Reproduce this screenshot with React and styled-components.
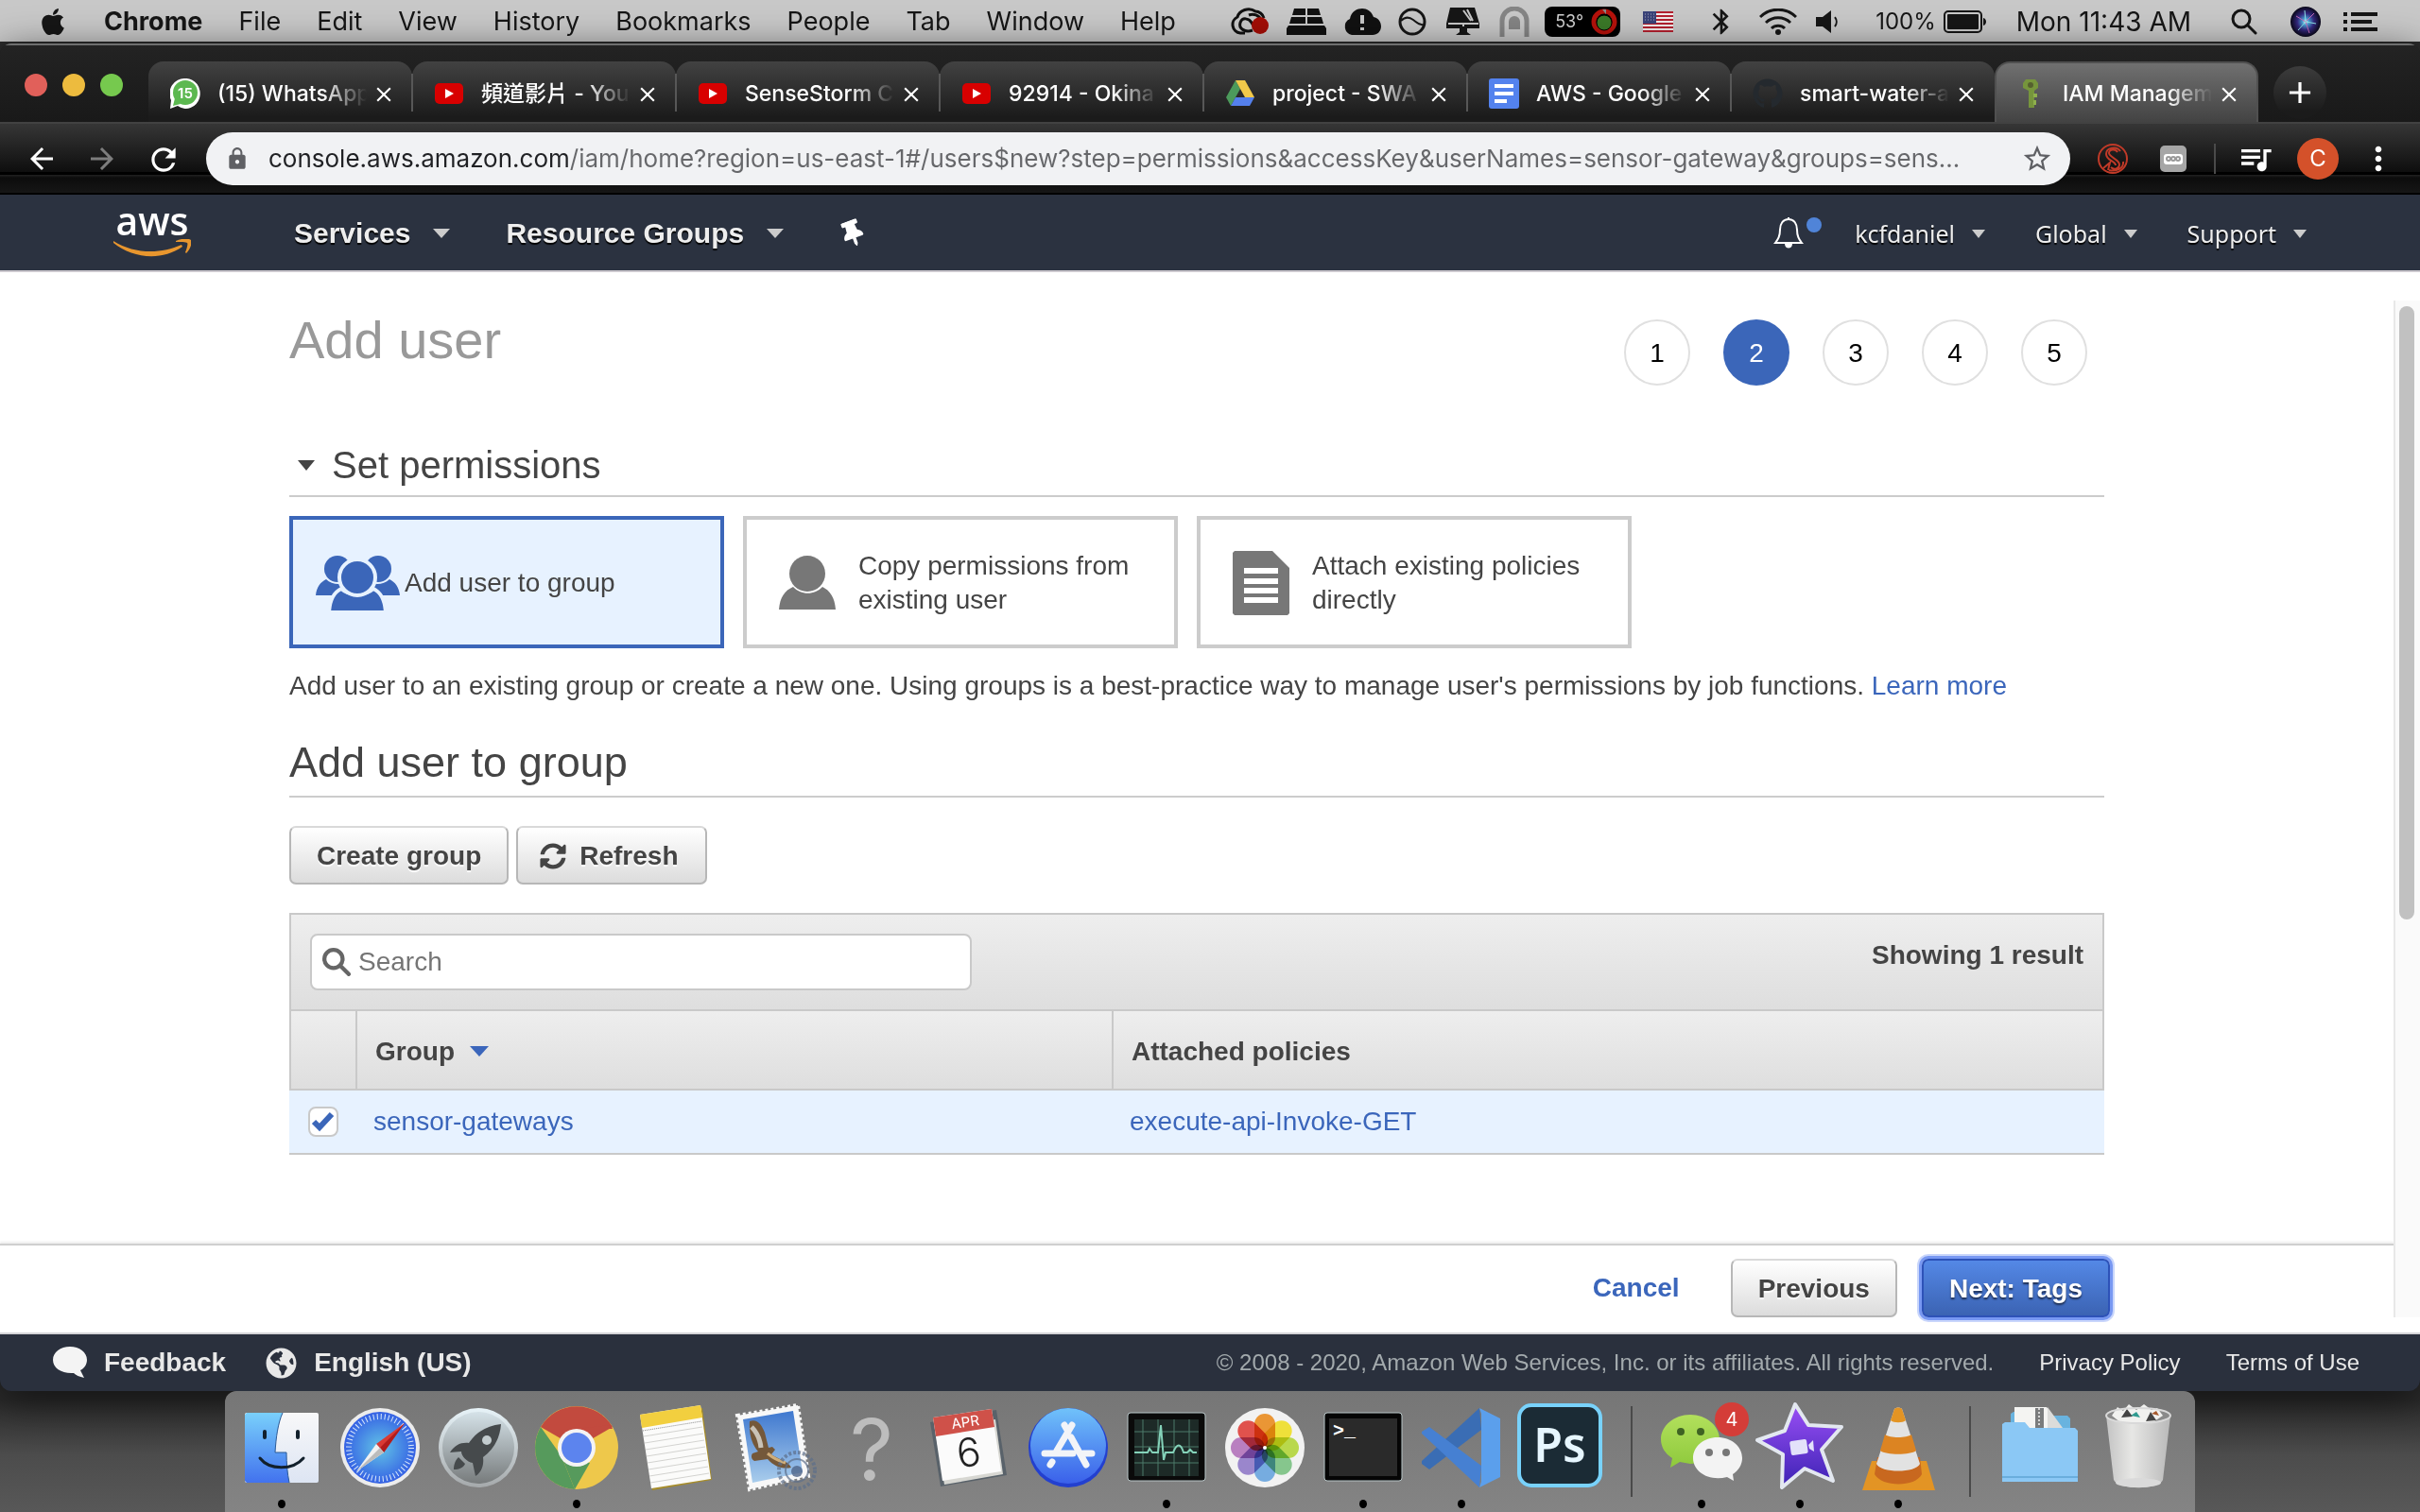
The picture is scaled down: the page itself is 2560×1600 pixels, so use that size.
import React, { useState } from "react";
import styled, { createGlobalStyle, css } from "styled-components";
import {
  MdArrowBack,
  MdArrowForward,
  MdRefresh,
  MdLock,
  MdStarBorder,
  MdQueueMusic,
  MdMoreVert,
  MdBluetooth,
  MdClose,
  MdAdd,
} from "react-icons/md";
import { FaApple, FaGithub, FaSyncAlt, FaThumbtack, FaGlobeAmericas } from "react-icons/fa";

const systemFont = `Inter, "Noto Sans CJK TC", sans-serif`;
const pageFont = `"Liberation Sans", Arial, sans-serif`;
const navFont = `"Noto Sans", "Open Sans", sans-serif`;

const GlobalStyle = createGlobalStyle`
  * { box-sizing: border-box; }
  body { margin: 0; background: #555; }
  button, input { font: inherit; color: inherit; }
  button { border: 0; padding: 0; background: none; cursor: pointer; }
  a { text-decoration: none; }
  svg { display: block; flex: none; }
`;

/* ---------- shell ---------- */

const Desktop = styled.div`
  min-height: 100vh;
  display: flex;
  flex-direction: column;
  background: linear-gradient(#2b2b2b 0, #2b2b2b calc(100% - 128px), #2b2b2b calc(100% - 118px), #4c4c4c calc(100% - 60px), #585858 100%);
  font-family: ${systemFont};
`;

const MenuBar = styled.header`
  height: 44px;
  flex: none;
  display: flex;
  align-items: center;
  justify-content: space-between;
  padding: 1px 45px 0 40px;
  background: #c8c8c8;
  color: #161616;
  font-size: 27px;
  line-height: 32px;
`;

const MenuList = styled.nav`
  display: flex;
  align-items: center;
  gap: 38px;
`;

const MenuItem = styled.button`
  font-weight: ${(p) => (p.$strong ? 700 : 400)};
  white-space: nowrap;
`;

const StatusList = styled.div`
  display: flex;
  align-items: center;
  white-space: nowrap;
`;

const StatusItem = styled.span`
  display: flex;
  align-items: center;
  gap: 8px;
  margin-left: ${(p) => p.$gap}px;
  font-size: ${(p) => (p.$small ? 24 : 28)}px;
`;

const TempBadge = styled.span`
  display: flex;
  align-items: center;
  gap: 8px;
  height: 32px;
  padding: 0 3px 0 11px;
  margin-left: 16px;
  border-radius: 8px;
  background: #000;
  color: #d0d0d0;
  font-size: 18px;
  line-height: 24px;
`;

/* ---------- browser window ---------- */

const BrowserWindow = styled.section`
  flex: 1;
  display: flex;
  flex-direction: column;
  margin-top: 2px;
  border-radius: 12px;
  overflow: hidden;
  background: #1d1d1d;
  box-shadow: 0 8px 40px rgba(0, 0, 0, 0.6);
`;

const TabStrip = styled.div`
  height: 85px;
  flex: none;
  display: flex;
  align-items: flex-end;
  padding-left: 26px;
  border-top: 2px solid #6e6f6f;
  border-bottom: 2px solid #424242;
  background: linear-gradient(#232323, #191919);
`;

const WindowControls = styled.div`
  display: flex;
  gap: 16px;
  align-self: center;
  margin-right: 27px;
  padding-top: 3px;
`;

const ControlDot = styled.button`
  width: 24px;
  height: 24px;
  border-radius: 50%;
  background: ${(p) => p.$color};
`;

const TabList = styled.div`
  display: flex;
  align-items: flex-end;
  height: 64px;
  flex: 0 1 2232px;
  min-width: 0;
`;

const Tab = styled.div`
  flex: 1 1 0;
  min-width: 0;
  height: 64px;
  display: flex;
  align-items: center;
  padding: 3px 19px 0 23px;
  border-radius: 16px 16px 0 0;
  color: #fff;
  background: linear-gradient(#424242, #1b1b1b 92%);
  ${(p) =>
    p.$active &&
    css`
      background: linear-gradient(#707070, #434343);
      border: 2px solid #505050;
      border-bottom: 0;
      padding: 1px 18px 0 20px;
    `}
`;

const TabDivider = styled.span`
  width: 2px;
  height: 40px;
  margin: 0 -1px 11px;
  background: ${(p) => (p.$hidden ? "transparent" : "#575757")};
  z-index: 1;
`;

const TabIcon = styled.span`
  width: 32px;
  height: 32px;
  display: grid;
  place-items: center;
  margin-right: 18px;
  flex: none;
`;

const TabTitle = styled.span`
  flex: 1;
  min-width: 0;
  overflow: hidden;
  white-space: nowrap;
  font-size: 23px;
  font-weight: 500;
  line-height: 32px;
  mask-image: linear-gradient(90deg, #000 68%, transparent 97%);
`;

const TabClose = styled.button`
  width: 24px;
  height: 24px;
  display: grid;
  place-items: center;
`;

const NewTab = styled.button`
  width: 56px;
  height: 56px;
  display: grid;
  place-items: center;
  margin: 0 0 3px 16px;
  border-radius: 50%;
  color: #fff;
  background: linear-gradient(#3c3c3c, #1b1b1b 85%);
`;

const Toolbar = styled.div`
  height: 75px;
  flex: none;
  display: flex;
  align-items: center;
  padding: 0 24px 0 26px;
  border-bottom: 2px solid #000;
  background: linear-gradient(#363636 0, #0e0e0e 51px, #000 51px, #000 54px, #222 54px, #0c0c0c 57px, #161616 100%);
  color: #fff;
`;

const NavButton = styled.button`
  display: grid;
  place-items: center;
  width: 36px;
  height: 36px;
  margin-right: 28px;
  color: ${(p) => (p.$dim ? "#7d7d7d" : "#fff")};
`;

const Omnibox = styled.label`
  flex: 1;
  height: 56px;
  display: flex;
  align-items: center;
  margin-right: 29px;
  padding: 0 18px 0 20px;
  border-radius: 28px;
  background: #f1f2f4;
  color: #5f6064;
`;

const UrlInput = styled.input`
  flex: 1;
  min-width: 0;
  margin: 0 14px 0 20px;
  padding: 0;
  border: 0;
  outline: 0;
  font-size: 26px;
  line-height: 36px;
  background: linear-gradient(90deg, #202124 317px, #66676a 317px);
  background-clip: text;
  -webkit-text-fill-color: transparent;
`;

const ToolDivider = styled.span`
  width: 2px;
  height: 32px;
  margin: 0 22px 0 29px;
  background: #4a4a4a;
`;

const Avatar = styled.button`
  width: 44px;
  height: 44px;
  margin: 0 22px 0 24px;
  border-radius: 50%;
  background: #d4512a;
  color: #fff;
  font-size: 24px;
  line-height: 44px;
`;

const IconButton = styled.button`
  display: grid;
  place-items: center;
  margin-left: ${(p) => p.$gap || 0}px;
`;

/* ---------- console navigation ---------- */

const ConsoleNav = styled.nav`
  height: 82px;
  flex: none;
  display: flex;
  align-items: center;
  padding: 2px 120px 0 119px;
  border-bottom: 2px solid #cdc9cf;
  background: #2b3240;
  color: #eee;
  text-shadow: 0 2px 1px #000;
`;

const AwsLogo = styled.a`
  width: 84px;
  margin-right: 108px;
  display: flex;
  flex-direction: column;
  align-items: center;
  gap: 8px;
  color: #fff;
  font-family: "Open Sans", sans-serif;
  font-weight: 600;
  font-size: 41px;
  line-height: 24px;
  text-shadow: none;
`;

const NavMain = styled.button`
  display: flex;
  align-items: center;
  gap: 24px;
  margin-right: 59px;
  font-family: ${pageFont};
  font-weight: 700;
  font-size: 30px;
  line-height: 36px;
  text-shadow: inherit;
  white-space: nowrap;
`;

const NavSide = styled.button`
  display: flex;
  align-items: center;
  gap: 18px;
  margin-left: ${(p) => (p.$first ? 30 : 53)}px;
  font-family: ${navFont};
  font-size: 25px;
  line-height: 36px;
  text-shadow: inherit;
`;

const Spacer = styled.span`
  flex: 1;
`;

const Caret = styled.span`
  border: ${(p) => p.$size || 9}px solid transparent;
  border-top-color: ${(p) => p.$color || "#ccc"};
  border-top-width: ${(p) => p.$tall || 10}px;
  border-bottom: 0;
`;

/* ---------- page ---------- */

const Viewport = styled.div`
  flex: 1;
  display: flex;
  background: #fff;
  padding-bottom: 16px;
  font-family: ${pageFont};
  font-size: 28px;
  line-height: 36px;
  color: #444;
`;

const PageColumn = styled.div`
  flex: 1;
  min-width: 0;
  display: flex;
  flex-direction: column;
`;

const ScrollTrack = styled.div`
  width: 28px;
  margin-top: 30px;
  padding: 6px 4px;
  border-left: 2px solid #e8e8e8;
  background: #fafafa;
`;

const ScrollThumb = styled.div`
  height: 61%;
  width: 16px;
  border-radius: 8px;
  background: #c1c1c1;
`;

const Main = styled.main`
  flex: 1;
  width: 100%;
  max-width: 1920px;
  margin: 0 auto;
  padding-top: 40px;
`;

const TitleRow = styled.div`
  display: flex;
  justify-content: space-between;
  align-items: flex-start;
`;

const PageTitle = styled.h1`
  margin: 0;
  font-weight: 400;
  font-size: 56px;
  line-height: 64px;
  color: #999;
`;

const Steps = styled.ol`
  display: flex;
  gap: 35px;
  margin: 10px 18px 0 0;
  padding: 0;
  list-style: none;
`;

const Step = styled.li`
  width: 70px;
  height: 70px;
  display: grid;
  place-items: center;
  padding-top: 2px;
  border-radius: 50%;
  border: 2px solid ${(p) => (p.$current ? "#3b66b9" : "#e0e0e0")};
  background: ${(p) => (p.$current ? "#3b66b9" : "#fff")};
  color: ${(p) => (p.$current ? "#fff" : "#000")};
`;

const SectionTitle = styled.h2`
  display: flex;
  align-items: center;
  gap: 18px;
  margin: 60px 0 20px;
  padding: 0 0 8px 9px;
  border-bottom: 2px solid #ccc;
  font-weight: 400;
  font-size: 40px;
  line-height: 48px;
`;

const GroupTitle = styled.h2`
  margin: 37px 0 30px;
  padding-bottom: 9px;
  border-bottom: 2px solid #ccc;
  font-weight: 400;
  font-size: 45px;
  line-height: 52px;
`;

const CardRow = styled.div`
  display: flex;
  gap: 20px;
`;

const Card = styled.button`
  width: 460px;
  height: 140px;
  display: flex;
  align-items: center;
  gap: 4px;
  padding: 1px 30px 0 24px;
  border: 4px solid ${(p) => (p.$selected ? "#3b66b9" : "#ccc")};
  background: ${(p) => (p.$selected ? "#e7f2ff" : "#fff")};
  text-align: left;
`;

const Intro = styled.p`
  margin: 22px 0 0;
`;

const TextLink = styled.a`
  color: #3b66bb;
  font-weight: ${(p) => (p.$strong ? 700 : 400)};
`;

const ButtonRow = styled.div`
  display: flex;
  gap: 8px;
  margin-bottom: 30px;
`;

const Button = styled.button`
  height: 62px;
  display: flex;
  align-items: center;
  gap: 14px;
  padding: 2px 27px 0;
  border: 2px solid #b7b7b7;
  border-top-color: #d9d9d9;
  border-radius: 7px;
  background: linear-gradient(#fff, #dcdcdc);
  font-weight: 700;
  text-shadow: 0 2px 1px #fff;
  ${(p) => p.$iconic && css`padding: 2px 28px 0 23px;`}
  ${(p) =>
    p.$primary &&
    css`
      border-color: #2d52b8;
      background: linear-gradient(#5488e6, #3b63b3);
      color: #fff;
      text-shadow: 0 2px 2px #1d2c4d;
      box-shadow: 0 0 0 3px #7898f2, 0 0 0 5px #c9d6fb;
    `}
`;

const SearchBar = styled.div`
  display: flex;
  justify-content: space-between;
  align-items: flex-start;
  padding: 20px;
  border: 2px solid #c9c9c9;
  background: linear-gradient(#eee, #dedede);
`;

const SearchBox = styled.label`
  width: 700px;
  height: 60px;
  display: flex;
  align-items: center;
  gap: 8px;
  padding: 0 11px;
  border: 2px solid #c9c9c9;
  border-radius: 8px;
  background: #fff;
`;

const SearchInput = styled.input`
  flex: 1;
  min-width: 0;
  padding: 0;
  border: 0;
  outline: 0;
  background: none;
  &::placeholder {
    color: #757575;
  }
`;

const ResultCount = styled.strong`
  margin-top: 5px;
`;

const GroupTable = styled.table`
  width: 100%;
  table-layout: fixed;
  border-collapse: separate;
  border-spacing: 0;
`;

const HeadCell = styled.th`
  width: ${(p) => p.$width || "auto"};
  height: 84px;
  padding: 3px 0 0 19px;
  border-right: 2px solid #c9c9c9;
  border-bottom: 2px solid #c9c9c9;
  background: linear-gradient(#eee, #dedede);
  text-align: left;
  &:first-child {
    border-left: 2px solid #c9c9c9;
  }
`;

const SortButton = styled.button`
  display: flex;
  align-items: center;
  gap: 16px;
  font-weight: 700;
`;

const Cell = styled.td`
  height: 68px;
  padding: ${(p) => (p.$check ? "0 0 0 20px" : "0 0 0 17px")};
  border-bottom: 2px solid #c9c9c9;
  background: #e7f2ff;
`;

const CheckLabel = styled.label`
  display: grid;
  width: 32px;
  height: 32px;
  > * {
    grid-area: 1 / 1;
  }
  > svg {
    pointer-events: none;
    display: none;
  }
  > input:checked + svg {
    display: block;
  }
`;

const CheckInput = styled.input`
  appearance: none;
  width: 32px;
  height: 32px;
  margin: 0;
  border: 2px solid #c9c9c9;
  border-radius: 8px;
  background: #fff;
`;

const ActionBar = styled.div`
  flex: none;
  border-top: 2px solid #cfcfcf;
  box-shadow: 0 -2px 2px #ededed;
`;

const ActionInner = styled.div`
  display: flex;
  align-items: center;
  justify-content: flex-end;
  gap: 26px;
  width: 100%;
  max-width: 1932px;
  margin: 0 auto;
  padding-top: 14px;
  > a {
    margin-right: 28px;
  }
`;

const Footer = styled.footer`
  height: 62px;
  flex: none;
  display: flex;
  align-items: center;
  padding: 0 64px 0 56px;
  border-top: 2px solid #d5d5d8;
  background: #2a303d;
  color: #e8e8e8;
  font-family: ${pageFont};
  font-size: 24px;
  line-height: 32px;
`;

const FooterButton = styled.button`
  display: flex;
  align-items: center;
  gap: 18px;
  margin-right: 42px;
  font-weight: 700;
  font-size: 28px;
`;

const Copyright = styled.span`
  color: #a3aaad;
`;

const FooterLink = styled.a`
  margin-left: 48px;
  color: #e8e8e8;
`;

/* ---------- dock ---------- */

const Dock = styled.nav`
  height: 128px;
  flex: none;
  align-self: center;
  display: flex;
  padding: 0 8px;
  border-radius: 12px 12px 0 0;
  background: linear-gradient(#767676, #848484);
`;

const DockSlot = styled.button`
  width: 104px;
  display: flex;
  flex-direction: column;
  align-items: center;
  gap: 3px;
`;

const RunningDot = styled.span`
  width: 8px;
  height: 9px;
  border-radius: 50%;
  background: #000;
`;

const DockDivider = styled.span`
  width: 2px;
  height: 96px;
  margin: 16px 21px 0 23px;
  background: #4a4a4a;
`;

/* ---------- small drawings ---------- */

const CloudApp = () => (
  <svg width="42" height="30" viewBox="0 0 42 30">
    <g fill="none" stroke="#111" strokeWidth="3">
      <path d="M16 27H11A9 9 0 0 1 8 10C10 3 20-1 27 4c4 0 8 3 9 7" />
      <path d="M24 24c-8 3-15-2-13-8s9-5 12 0 4 7 7 7M20 8c5-2 11 0 13 5" />
    </g>
    <circle cx="32" cy="19" r="9" fill="#a30e06" />
  </svg>
);

const BoxStack = () => (
  <svg width="42" height="28" viewBox="0 0 42 28" fill="#111">
    <path d="M8 0h12v7H6zM22 0h12l2 7H22zM5 9h15v7H3zM22 9h15l2 7H22zM2 18h38l2 3v7H0v-7z" />
  </svg>
);

const CloudAlert = () => (
  <svg width="40" height="28" viewBox="0 0 40 28">
    <path d="M9 28A9 9 0 0 1 7 11C8 3 15 0 20 0s10 3 12 9c5 1 8 5 8 10s-4 9-9 9z" fill="#111" />
    <path d="M20 7v9M20 20v3" stroke="#c8c8c8" strokeWidth="4" />
  </svg>
);

const CircleWave = () => (
  <svg width="30" height="30" viewBox="0 0 30 30" fill="none" stroke="#161616" strokeWidth="3">
    <circle cx="15" cy="15" r="13" />
    <path d="M3 14c5-5 9-4 13-1s6 6 11 5" strokeWidth="2" />
  </svg>
);

const DesktopMac = () => (
  <svg width="36" height="30" viewBox="0 0 36 30">
    <path d="M4 0h26l5 17v5H22v4l4 3H10l4-3v-4H0v-5z" fill="#161616" />
    <path d="M2 17h32M18 18v2M18 3l8 11M22 2l6 12" stroke="#c8c8c8" strokeWidth="2" fill="none" />
  </svg>
);

const Arch = () => (
  <svg width="32" height="32" viewBox="0 0 32 32" fill="none" stroke="#858585" strokeWidth="5">
    <path d="M3 32V15a13 13 0 0 1 26 0v17" />
    <path d="M10 24v-8a6 6 0 0 1 12 0v8z" fill="#858585" stroke="none" />
  </svg>
);

const Gauge = () => (
  <svg width="28" height="28" viewBox="0 0 28 28">
    <circle cx="14" cy="14" r="11" fill="none" stroke="#b5120b" strokeWidth="5" />
    <circle cx="14" cy="15" r="8" fill="#3b7a28" stroke="#000" />
    <path d="M12 1h4v5z" fill="#888" />
  </svg>
);

const Flag = () => (
  <svg width="32" height="22" viewBox="0 0 32 22">
    <rect width="32" height="22" fill="#f3ecec" />
    {[0, 1, 2, 3, 4, 5].map((i) => (
      <rect key={i} y={i * 4} width="32" height="2" fill="#b3202f" />
    ))}
    <rect width="14" height="13" fill="#3a4379" />
    <path d="M2 3h11M2 6h11M2 9h11" stroke="#aab" strokeDasharray="1 2" />
  </svg>
);

const Wifi = () => (
  <svg width="40" height="28" viewBox="0 0 40 28" fill="none" stroke="#161616" strokeWidth="3">
    <path d="M1 9a27 27 0 0 1 38 0M7 15a19 19 0 0 1 26 0M13 21a10 10 0 0 1 14 0" />
    <circle cx="20" cy="25" r="3" fill="#161616" stroke="none" />
  </svg>
);

const Volume = () => (
  <svg width="26" height="24" viewBox="0 0 26 24">
    <path d="M0 7h7l9-7v24l-9-7H0z" fill="#161616" />
    <path d="M20 7a8 8 0 0 1 0 10" fill="none" stroke="#161616" strokeWidth="2" />
  </svg>
);

const Battery = () => (
  <svg width="46" height="24" viewBox="0 0 46 24">
    <rect x="1" y="1" width="39" height="22" rx="4" fill="none" stroke="#161616" strokeWidth="2" />
    <rect x="4" y="4" width="33" height="16" rx="1" fill="#161616" />
    <path d="M42 8c4 1 4 7 0 8z" fill="#161616" />
  </svg>
);

const Magnifier = ({ size = 28, width = 3, color = "#161616" }) => (
  <svg width={size} height={size} viewBox="0 0 28 28" fill="none" stroke={color} strokeWidth={width} aria-hidden="true">
    <circle cx="11" cy="11" r="9" />
    <path d="M18 18l8 8" strokeLinecap="round" />
  </svg>
);

const Siri = () => (
  <svg width="32" height="32" viewBox="0 0 32 32">
    <defs>
      <radialGradient id="siri">
        <stop offset="0" stopColor="#fff" />
        <stop offset=".2" stopColor="#4aa5d8" />
        <stop offset=".55" stopColor="#33287f" />
        <stop offset="1" stopColor="#0a0818" />
      </radialGradient>
    </defs>
    <circle cx="16" cy="16" r="16" fill="url(#siri)" />
    <path d="M16 16L6 10M16 16l9-9M16 16l4 12" stroke="#c86ab8" strokeWidth="1" />
    <path d="M16 16L15 4M16 16l-8 9M16 16l11 2" stroke="#8ee6e8" strokeWidth="1" />
  </svg>
);

const ListIcon = () => (
  <svg width="36" height="20" viewBox="0 0 36 20" stroke="#161616" strokeWidth="4">
    <path d="M0 2h4M8 2h28M0 10h4M8 10h22M0 18h4M8 18h28" />
  </svg>
);

const WhatsAppIcon = () => (
  <svg width="32" height="32" viewBox="0 0 32 32">
    <path d="M16 0a15 16 0 1 1-8 29l-8 3 1-9A16 16 0 0 1 16 0z" fill="#fff" />
    <circle cx="16" cy="15" r="13" fill="#5cb850" />
    <path d="M3 29l2-8 6 6z" fill="#5cb850" />
    <text x="16" y="21" textAnchor="middle" fontSize="15" fontWeight="600" fill="#fff" fontFamily="Inter, sans-serif">15</text>
  </svg>
);

const YoutubeIcon = () => (
  <svg width="30" height="22" viewBox="0 0 30 22">
    <rect width="30" height="22" rx="5" fill="#d80000" />
    <path d="M11 6l9 5-9 5z" fill="#fff" />
  </svg>
);

const DriveIcon = () => (
  <svg width="30" height="27" viewBox="0 0 30 27">
    <path d="M10 0L0 18l5 9 10-18z" fill="#4c9a5b" />
    <path d="M10 0h10l10 18H20z" fill="#f2c94a" />
    <path d="M10 18h20l-5 9H5z" fill="#5480ec" />
  </svg>
);

const DocsIcon = () => (
  <svg width="32" height="32" viewBox="0 0 32 32">
    <rect width="32" height="32" rx="3" fill="#5382ee" />
    <path d="M6 8h20M6 16h20M6 24h13" stroke="#fff" strokeWidth="4" />
  </svg>
);

const KeyIcon = () => (
  <svg width="20" height="30" viewBox="0 0 20 30">
    <path d="M5 0h10l3 4v5l-4 3v18H8V12L2 9V4z" fill="#76953c" />
    <path d="M13 15h4v4h-4zM13 22h3v5h-3z" fill="#8fb04c" />
    <circle cx="10" cy="6" r="3" fill="#55602f" />
  </svg>
);

const SerpentIcon = () => (
  <svg width="32" height="32" viewBox="0 0 32 32" fill="none" stroke="#c03a28" strokeWidth="2">
    <circle cx="16" cy="16" r="15" />
    <path d="M21 9c-2-4-9-3-9 1s11 7 11 12-6 6-9 3M24 8c-4-6-15-4-15 3s10 7 10 12M6 26l7-6-2 8M12 28c8 2 16-2 15-9" />
  </svg>
);

const GreyExtension = () => (
  <svg width="28" height="28" viewBox="0 0 28 28">
    <rect width="28" height="28" rx="5" fill="#a6a6a6" />
    <rect x="4" y="9" width="20" height="11" rx="3" fill="#fff" />
    <g fill="none" stroke="#999" strokeWidth="2">
      <circle cx="9" cy="14" r="2" />
      <circle cx="14" cy="14" r="2" />
      <circle cx="19" cy="14" r="2" />
    </g>
  </svg>
);

const Smile = () => (
  <svg width="82" height="20" viewBox="0 0 82 20" fill="#e8962e">
    <path d="M0 2c22 14 50 14 72 4l1 2C50 24 20 20 0 4z" />
    <path d="M66 2c6-3 14-3 16-1s-1 11-5 14l-1-1c2-5 3-9 2-10s-7-1-12-1z" />
  </svg>
);

const Bell = () => (
  <svg width="56" height="36" viewBox="0 0 56 36">
    <path d="M16 3c-6 0-9 5-9 11 0 7-2 10-5 14h28c-3-4-5-7-5-14 0-6-3-11-9-11zM16 1v2" fill="none" stroke="#fff" strokeWidth="2" />
    <path d="M12 29h8c0 6-8 6-8 0z" fill="#fff" />
    <circle cx="43" cy="9" r="8" fill="#5084d8" />
  </svg>
);

const PeopleIcon = () => (
  <svg width="90" height="58" viewBox="0 0 90 58" fill="#3b66b9">
    <circle cx="23" cy="14" r="14" />
    <circle cx="66" cy="14" r="14" />
    <path d="M0 42c1-9 5-14 11-17 5 5 13 6 19 4v13zM89 42c-1-9-5-14-11-17-5 5-13 6-19 4v13z" />
    <path d="M14 60c1-14 5-21 13-25 9 8 25 8 34 0 8 4 12 11 13 25z" stroke="#e7f2ff" strokeWidth="4" />
    <ellipse cx="44" cy="23" rx="19" ry="19" stroke="#e7f2ff" strokeWidth="4" />
  </svg>
);

const PersonIcon = () => (
  <svg width="90" height="58" viewBox="0 0 90 58" fill="#777">
    <circle cx="40" cy="19" r="19" />
    <path d="M10 57c1-13 6-20 15-24 8 9 23 9 31 0 8 4 13 11 14 24z" />
  </svg>
);

const FileIcon = () => (
  <svg width="90" height="68" viewBox="0 0 90 68">
    <path d="M12 0h40l18 18v48l-2 2H12l-2-2V2z" fill="#777" />
    <path d="M22 21h36M22 32h36M22 42h36M22 52h36" stroke="#fff" strokeWidth="6" />
  </svg>
);

const CheckMark = () => (
  <svg width="32" height="32" viewBox="0 0 32 32" fill="none" stroke="#3b66b9" strokeWidth="6" aria-hidden="true">
    <path d="M6 16l6 6L25 8" />
  </svg>
);

const SpeechBubble = () => (
  <svg width="36" height="34" viewBox="0 0 36 34" fill="#f4f4f4">
    <path d="M18 0c10 0 18 6 18 14 0 5-3 9-7 11l4 8c-5-1-9-3-11-5C10 29 0 23 0 14 0 6 8 0 18 0z" />
  </svg>
);

/* ---------- dock drawings, each on a 104 x 112 slot ---------- */

const Art = ({ children }) => (
  <svg width="104" height="112" viewBox="0 0 104 112" aria-hidden="true">
    {children}
  </svg>
);

const Gradient = ({ id, from, to }) => (
  <linearGradient id={id} x1="0" y1="0" x2="0" y2="1">
    <stop offset="0" stopColor={from} />
    <stop offset="1" stopColor={to} />
  </linearGradient>
);

const Finder = () => (
  <Art>
    <defs>
      <Gradient id="finderL" from="#79d0fb" to="#4272ee" />
      <Gradient id="finderR" from="#f8f8f9" to="#dde5f3" />
    </defs>
    <rect x="13" y="23" width="78" height="74" rx="2" fill="url(#finderR)" />
    <path d="M15 23h38c-5 11-7 26-8 42h12c0 12 1 22 3 32H15l-2-2V25z" fill="url(#finderL)" />
    <path d="M53 23c-5 11-7 26-8 42h12c0 12 1 22 3 32" fill="none" stroke="#2b5a96" strokeWidth="1" />
    <path d="M34 43v6M69 43v6" stroke="#12202c" strokeWidth="4" strokeLinecap="round" />
    <path d="M29 71c10 13 35 13 46 0" fill="none" stroke="#12202c" strokeWidth="3" strokeLinecap="round" />
  </Art>
);

const Safari = () => (
  <Art>
    <defs>
      <radialGradient id="safari">
        <stop offset="0" stopColor="#62c3e6" />
        <stop offset="1" stopColor="#3561e4" />
      </radialGradient>
    </defs>
    <circle cx="52" cy="60" r="42" fill="#ececec" />
    <circle cx="52" cy="60" r="38" fill="url(#safari)" />
    <circle cx="52" cy="60" r="33" fill="none" stroke="#dbe9fb" strokeWidth="6" strokeDasharray="1 3" />
    <path d="M78 34L56 65l-8-9z" fill="#d93a34" />
    <path d="M78 34L56 65l-4-5z" fill="#b01c1c" />
    <path d="M27 85l21-29 8 9z" fill="#f1f1f1" />
    <path d="M27 85l25-25 4 5z" fill="#bcbcbc" />
  </Art>
);

const Launchpad = () => (
  <Art>
    <defs>
      <Gradient id="launch" from="#d5e2e8" to="#777b7c" />
      <Gradient id="launchRim" from="#e7f3f8" to="#a5a9ab" />
    </defs>
    <circle cx="52" cy="60" r="42" fill="url(#launchRim)" />
    <circle cx="52" cy="60" r="38" fill="url(#launch)" />
    <path d="M76 35c-16 2-27 9-34 20-8-1-15 2-20 10l12-1c0 5 6 11 12 12l3 14c7-5 9-12 8-20 11-8 18-20 19-35z" fill="#464a4c" />
    <path d="M31 70c-3 3-5 7-5 13 6 0 10-2 12-6z" fill="#464a4c" />
    <circle cx="61" cy="52" r="5" fill="#c3cccf" />
  </Art>
);

const Chrome = () => (
  <Art>
    <circle cx="52" cy="60" r="44" fill="#eec84b" />
    <path d="M52 60L14 38A44 44 0 0 1 90 38z" fill="#c24a3e" />
    <path d="M14 38l22 31 14 35A44 44 0 0 1 14 38z" fill="#569a5c" />
    <path d="M36 69l14 35 16-28z" fill="#569a5c" />
    <path d="M52 40h38l-2-4z" fill="#c24a3e" />
    <circle cx="52" cy="60" r="20" fill="#f4f4f4" />
    <circle cx="52" cy="60" r="16" fill="#5c84ee" />
  </Art>
);

const Notes = () => (
  <Art>
    <path d="M16 27l65-9 10 76-63 11z" fill="#a78d2b" />
    <path d="M15 25l64-10 11 78-63 10z" fill="#fbfbfa" />
    <path d="M15 25l64-10 2 13-64 11z" fill="#f2cf3f" />
    {[0, 1, 2, 3, 4, 5, 6, 7].map((i) => (
      <path key={i} d={`M${19 + i} ${48 + i * 7}l62-10`} stroke="#d3d3d0" />
    ))}
    <path d="M18 42l62-10" stroke="#888" strokeDasharray="1 1" />
  </Art>
);

const Mail = () => (
  <Art>
    <defs>
      <Gradient id="sky" from="#3f78cf" to="#a9cdec" />
    </defs>
    <path d="M14 26l64-11 11 75-62 14z" fill="#f8f8f8" stroke="#f8f8f8" strokeWidth="4" strokeDasharray="3 3" />
    <path d="M20 30l53-9 10 65-53 11z" fill="url(#sky)" />
    <path d="M27 32c8-3 13 4 16 12l4 16 4-1 3 3-4 5c8 6 17 6 21 14-9 2-18-1-25-9l-14 2c-3-2-4-5-2-8l6-2c-6-7-10-17-9-32z" fill="#74583a" />
    <path d="M29 38c5 5 9 12 10 22" stroke="#c9c2b6" strokeWidth="5" fill="none" />
    <path d="M46 66c6 5 12 8 19 10" stroke="#cfae7c" strokeWidth="3" fill="none" />
    <g fill="none" stroke="#5d6f8a" opacity=".7">
      <circle cx="77" cy="84" r="19" strokeWidth="4" strokeDasharray="3 2" />
      <circle cx="77" cy="84" r="12" strokeWidth="2" />
    </g>
    <circle cx="77" cy="85" r="6" fill="#4d6488" opacity=".8" />
  </Art>
);

const Missing = () => (
  <Art>
    <text x="52" y="94" textAnchor="middle" fontSize="90" fontWeight="400" fontFamily="Inter, sans-serif" fill="#bdbdbd">?</text>
  </Art>
);

const Calendar = () => (
  <Art>
    <path d="M10 33l64-12 6-1 11 69-70 12z" fill="#59626a" />
    <path d="M15 40l64-10 8 58-62 11z" fill="#d7d7d2" />
    <path d="M13 28l62-9 10 66-62 10z" fill="#fbfbfb" />
    <path d="M13 28l62-9 3 19-62 10z" fill="#cf5149" />
    <g transform="rotate(-8 50 60)" textAnchor="middle" fontFamily="Inter, sans-serif">
      <text x="51" y="38" fontSize="15" fill="#fff">APR</text>
      <text x="50" y="80" fontSize="42" fontWeight="300" fill="#222">6</text>
    </g>
  </Art>
);

const AppStore = () => (
  <Art>
    <defs>
      <Gradient id="store" from="#70c2fa" to="#3a60ea" />
    </defs>
    <circle cx="52" cy="60" r="42" fill="#2340cf" />
    <circle cx="52" cy="58" r="40" fill="url(#store)" />
    <g stroke="#f2f4f8" strokeWidth="7" strokeLinecap="round" fill="none">
      <path d="M56 36L40 63M35 75l-2 3M48 36l4 7M55 49l16 29M27 66h30M68 66h9" />
    </g>
  </Art>
);

const Activity = () => (
  <Art>
    <rect x="11" y="23" width="82" height="72" rx="3" fill="#0a0a0a" stroke="#b9c6c8" strokeWidth="1" />
    <rect x="18" y="30" width="68" height="60" fill="#1d2a27" />
    <g stroke="#4c7a6b" strokeWidth="1">
      <path d="M27 30v60M43 30v60M60 30v60M76 30v60M18 43h68M18 59h68M18 76h68" />
    </g>
    <path d="M18 65h14l2-4 3 4h6l3-29 3 37 2-8h8c4-10 8-10 11 0h4l3-3 3 3h4" fill="none" stroke="#84d2b9" strokeWidth="2" />
  </Art>
);

const petals = ["#ea9635", "#efe03a", "#b9d84c", "#86c68d", "#76ace0", "#9a86cc", "#b97fc0", "#e0524d"];

const Photos = () => (
  <Art>
    <circle cx="52" cy="60" r="42" fill="#f2f2f2" />
    <g style={{ isolation: "isolate" }}>
      {petals.map((color, i) => (
        <rect
          key={color}
          x="41"
          y="24"
          width="22"
          height="36"
          rx="11"
          fill={color}
          transform={`rotate(${i * 45} 52 60)`}
          style={{ mixBlendMode: "multiply" }}
        />
      ))}
    </g>
    <circle cx="52" cy="60" r="2" fill="#fff" />
  </Art>
);

const Terminal = () => (
  <Art>
    <rect x="11" y="23" width="82" height="72" rx="3" fill="#050505" stroke="#b9c6c8" strokeWidth="1" />
    <rect x="16" y="29" width="72" height="61" fill="#2a2a2a" />
    <text x="20" y="48" fontSize="20" fontWeight="700" fontFamily='"Liberation Mono", monospace' fill="#fff">&gt;_</text>
  </Art>
);

const VsCode = () => (
  <Art>
    <path d="M71 18L10 74v3l8 6 55-42z" fill="#3a6db4" />
    <path d="M10 43l8-5 55 41-2 23-61-57z" fill="#4680d2" />
    <path d="M71 18l22 11v62l-22 11 2-6V24z" fill="#5b9fec" />
  </Art>
);

const Photoshop = () => (
  <Art>
    <rect x="9" y="15" width="86" height="85" rx="13" fill="#1b2b35" stroke="#78d2fb" strokeWidth="4" />
    <text x="52" y="75" textAnchor="middle" fontSize="50" fontWeight="600" fontFamily='"Noto Sans", sans-serif' fill="#e6f6ff">Ps</text>
  </Art>
);

const WeChat = () => (
  <Art>
    <defs>
      <Gradient id="wechat" from="#b2e05c" to="#8ec93c" />
    </defs>
    <path d="M40 25c17 0 31 12 31 26S57 77 40 77l-11-2-10 6 2-10C13 66 9 59 9 51c0-14 14-26 31-26z" fill="url(#wechat)" />
    <ellipse cx="30" cy="43" rx="4" ry="4" fill="#3f6323" />
    <ellipse cx="51" cy="43" rx="4" ry="4" fill="#3f6323" />
    <path d="M69 49c15 0 26 10 26 22 0 7-4 13-10 17l1 7-7-4c-20 5-36-6-36-20 0-12 11-22 26-22z" fill="#f3f3f3" />
    <circle cx="60" cy="65" r="4" fill="#777" />
    <circle cx="78" cy="65" r="4" fill="#777" />
    <circle cx="84" cy="30" r="18" fill="#d43d38" />
    <text x="84" y="37" textAnchor="middle" fontSize="20" fontFamily="Inter, sans-serif" fill="#fff">4</text>
  </Art>
);

const IMovie = () => (
  <Art>
    <defs>
      <Gradient id="imovie" from="#9a4ff5" to="#3c22b4" />
    </defs>
    <path d="M47 14l14 22 35 2-21 24 12 33-30-13-24 20 1-35L7 52l29-10z" fill="url(#imovie)" stroke="#e3e8f0" strokeWidth="4" strokeLinejoin="round" />
    <rect x="42" y="52" width="18" height="15" rx="2" fill="#e3e1fa" transform="rotate(-8 51 60)" />
    <path d="M61 57l5-5 1 12-5-3z" fill="#e3e1fa" />
  </Art>
);

const Vlc = () => (
  <Art>
    <path d="M24 74h58l9 31H14z" fill="#e39424" />
    <path d="M30 70h45l2 18c-7 14-42 14-50 0z" fill="#c8681f" />
    <path d="M48 19c2-2 6-2 8 0l19 58c-4 10-42 10-46 0z" fill="#e2e2e2" />
    <path d="M48 19c2-2 6-2 8 0l4 12c-3 3-13 3-16 0z" fill="#e39424" />
    <path d="M38 46c5 4 23 4 28 0l5 17c-6 5-32 5-38 0z" fill="#dc8422" />
  </Art>
);

const Folder = () => (
  <Art>
    <path d="M21 24l3-2h14l3 4h40l3 3v20H21z" fill="#69b3df" />
    <path d="M25 17h34l15 22H25z" fill="#f4f4f2" />
    <path d="M47 18h9v22h-9z" fill="#7a7c7d" />
    <path d="M51 18v20" stroke="#d5d5d5" strokeWidth="2" strokeDasharray="2 2" />
    <path d="M60 17l16 22H60z" fill="#dcdcda" />
    <path d="M12 35l3-2h21l5 6h48l3 3v54H12z" fill="#8bc8f5" />
    <path d="M12 91h80" stroke="#6aaedd" strokeWidth="2" />
  </Art>
);

const Trash = () => (
  <Art>
    <defs>
      <linearGradient id="bin" x1="0" y1="0" x2="1" y2="0">
        <stop offset="0" stopColor="#c8c8c8" />
        <stop offset=".4" stopColor="#eeeeec" />
        <stop offset="1" stopColor="#bdbdbd" />
      </linearGradient>
    </defs>
    <ellipse cx="52" cy="26" rx="34" ry="8" fill="#8a8a8a" />
    <path d="M24 26l6-9 6 4 6-7 8 6 8-6 8 6 6-2 6 8-12 8H34z" fill="#f1f1ef" />
    <path d="M34 28l6-9 6 8zM60 32l5-10 6 9z" fill="#444" />
    <path d="M44 26l6-4 4 6z" fill="#2f9a8f" />
    <path d="M66 24l5-3 3 5z" fill="#a75a2e" />
    <path d="M18 26c5 10 63 10 68 0l-8 68c-4 11-47 11-52 0z" fill="url(#bin)" opacity=".94" />
    <ellipse cx="52" cy="97" rx="24" ry="5" fill="#dadada" />
    <ellipse cx="52" cy="26" rx="34" ry="8" fill="none" stroke="#d9d9d9" strokeWidth="2" />
  </Art>
);

/* ---------- data ---------- */

const menus = ["File", "Edit", "View", "History", "Bookmarks", "People", "Tab", "Window", "Help"];

const tabs = [
  { title: "(15) WhatsApp", icon: <WhatsAppIcon /> },
  { title: "頻道影片 - You", icon: <YoutubeIcon /> },
  { title: "SenseStorm C", icon: <YoutubeIcon /> },
  { title: "92914 - Okina", icon: <YoutubeIcon /> },
  { title: "project - SWA", icon: <DriveIcon /> },
  { title: "AWS - Google", icon: <DocsIcon /> },
  { title: "smart-water-a", icon: <FaGithub size={32} color="#24292e" /> },
  { title: "IAM Managem", icon: <KeyIcon />, active: true },
];

const dockGroups = [
  [
    ["Finder", Finder, true],
    ["Safari", Safari],
    ["Launchpad", Launchpad],
    ["Chrome", Chrome, true],
    ["Notes", Notes],
    ["Mail", Mail],
    ["Missing application", Missing],
    ["Calendar", Calendar],
    ["App Store", AppStore],
    ["Activity Monitor", Activity, true],
    ["Photos", Photos],
    ["Terminal", Terminal, true],
    ["Code", VsCode, true],
    ["Photoshop", Photoshop],
  ],
  [
    ["WeChat", WeChat, true],
    ["iMovie", IMovie, true],
    ["VLC", Vlc, true],
  ],
  [
    ["Downloads", Folder],
    ["Trash", Trash],
  ],
];

const pageUrl =
  "console.aws.amazon.com/iam/home?region=us-east-1#/users$new?step=permissions&accessKey&userNames=sensor-gateway&groups=sens...";

export default function App() {
  const [checked, setChecked] = useState(true);

  return (
    <Desktop>
      <GlobalStyle />
      <MenuBar>
        <MenuList>
          <MenuItem aria-label="Apple menu">
            <FaApple size={32} />
          </MenuItem>
          <MenuItem $strong>Chrome</MenuItem>
          {menus.map((name) => (
            <MenuItem key={name}>{name}</MenuItem>
          ))}
        </MenuList>
        <StatusList>
          <StatusItem $gap={0}><CloudApp /></StatusItem>
          <StatusItem $gap={18}><BoxStack /></StatusItem>
          <StatusItem $gap={18}><CloudAlert /></StatusItem>
          <StatusItem $gap={18}><CircleWave /></StatusItem>
          <StatusItem $gap={21}><DesktopMac /></StatusItem>
          <StatusItem $gap={20}><Arch /></StatusItem>
          <TempBadge>53° <Gauge /></TempBadge>
          <StatusItem $gap={24}><Flag /></StatusItem>
          <StatusItem $gap={35}><MdBluetooth size={32} /></StatusItem>
          <StatusItem $gap={24}><Wifi /></StatusItem>
          <StatusItem $gap={20}><Volume /></StatusItem>
          <StatusItem $gap={37} $small>100% <Battery /></StatusItem>
          <StatusItem $gap={31}>Mon 11:43 AM</StatusItem>
          <StatusItem $gap={42}><Magnifier /></StatusItem>
          <StatusItem $gap={35}><Siri /></StatusItem>
          <StatusItem $gap={24}><ListIcon /></StatusItem>
        </StatusList>
      </MenuBar>

      <BrowserWindow>
        <TabStrip>
          <WindowControls>
            <ControlDot $color="#e1605a" aria-label="Close window" />
            <ControlDot $color="#edbb3e" aria-label="Minimise window" />
            <ControlDot $color="#76c94e" aria-label="Zoom window" />
          </WindowControls>
          <TabList>
            {tabs.map((tab, i) => (
              <React.Fragment key={tab.title}>
                <Tab $active={tab.active}>
                  <TabIcon>{tab.icon}</TabIcon>
                  <TabTitle>{tab.title}</TabTitle>
                  <TabClose aria-label={`Close ${tab.title}`}>
                    <MdClose size={26} />
                  </TabClose>
                </Tab>
                {i < tabs.length - 1 && <TabDivider $hidden={i === tabs.length - 2} />}
              </React.Fragment>
            ))}
          </TabList>
          <NewTab aria-label="New tab">
            <MdAdd size={38} />
          </NewTab>
        </TabStrip>

        <Toolbar>
          <NavButton aria-label="Back"><MdArrowBack size={36} /></NavButton>
          <NavButton aria-label="Forward" $dim><MdArrowForward size={36} /></NavButton>
          <NavButton aria-label="Reload"><MdRefresh size={38} /></NavButton>
          <Omnibox>
            <MdLock size={26} />
            <UrlInput aria-label="Address" defaultValue={pageUrl} />
            <MdStarBorder size={34} />
          </Omnibox>
          <IconButton aria-label="Script blocker"><SerpentIcon /></IconButton>
          <IconButton aria-label="Extension" $gap={34}><GreyExtension /></IconButton>
          <ToolDivider />
          <IconButton aria-label="Playlist"><MdQueueMusic size={40} /></IconButton>
          <Avatar>C</Avatar>
          <IconButton aria-label="More"><MdMoreVert size={40} /></IconButton>
        </Toolbar>

        <ConsoleNav>
          <AwsLogo href="#home">
            aws
            <Smile />
          </AwsLogo>
          <NavMain>Services <Caret /></NavMain>
          <NavMain>Resource Groups <Caret /></NavMain>
          <IconButton aria-label="Pin">
            <FaThumbtack size={28} color="#fff" transform="rotate(-20)" />
          </IconButton>
          <Spacer />
          <IconButton aria-label="Notifications"><Bell /></IconButton>
          <NavSide $first>kcfdaniel <Caret $size={7} $tall={9} /></NavSide>
          <NavSide>Global <Caret $size={7} $tall={9} /></NavSide>
          <NavSide>Support <Caret $size={7} $tall={9} /></NavSide>
        </ConsoleNav>

        <Viewport>
          <PageColumn>
            <Main>
              <TitleRow>
                <PageTitle>Add user</PageTitle>
                <Steps>
                  {[1, 2, 3, 4, 5].map((n) => (
                    <Step key={n} $current={n === 2}>{n}</Step>
                  ))}
                </Steps>
              </TitleRow>

              <SectionTitle>
                <Caret $color="#444" $tall={11} />
                Set permissions
              </SectionTitle>
              <CardRow>
                <Card $selected><PeopleIcon />Add user to group</Card>
                <Card><PersonIcon />Copy permissions from existing user</Card>
                <Card><FileIcon />Attach existing policies directly</Card>
              </CardRow>
              <Intro>
                Add user to an existing group or create a new one. Using groups is a best-practice way to manage user's
                permissions by job functions. <TextLink href="#learn">Learn more</TextLink>
              </Intro>

              <GroupTitle>Add user to group</GroupTitle>
              <ButtonRow>
                <Button>Create group</Button>
                <Button $iconic><FaSyncAlt size={28} />Refresh</Button>
              </ButtonRow>

              <SearchBar>
                <SearchBox>
                  <Magnifier size={30} width={4} color="#666" />
                  <SearchInput type="text" placeholder="Search" aria-label="Search" />
                </SearchBox>
                <ResultCount>Showing 1 result</ResultCount>
              </SearchBar>
              <GroupTable>
                <thead>
                  <tr>
                    <HeadCell $width="72px" aria-label="Selected" />
                    <HeadCell $width="800px">
                      <SortButton>Group <Caret $color="#3b66bb" $size={10} $tall={11} /></SortButton>
                    </HeadCell>
                    <HeadCell>Attached policies</HeadCell>
                  </tr>
                </thead>
                <tbody>
                  <tr>
                    <Cell $check>
                      <CheckLabel>
                        <CheckInput
                          type="checkbox"
                          aria-label="Select sensor-gateways"
                          checked={checked}
                          onChange={(e) => setChecked(e.target.checked)}
                        />
                        <CheckMark />
                      </CheckLabel>
                    </Cell>
                    <Cell><TextLink href="#sensor-gateways">sensor-gateways</TextLink></Cell>
                    <Cell><TextLink href="#policy">execute-api-Invoke-GET</TextLink></Cell>
                  </tr>
                </tbody>
              </GroupTable>
            </Main>
            <ActionBar>
              <ActionInner>
                <TextLink href="#cancel" $strong>Cancel</TextLink>
                <Button>Previous</Button>
                <Button $primary>Next: Tags</Button>
              </ActionInner>
            </ActionBar>
          </PageColumn>
          <ScrollTrack>
            <ScrollThumb />
          </ScrollTrack>
        </Viewport>

        <Footer>
          <FooterButton><SpeechBubble />Feedback</FooterButton>
          <FooterButton><FaGlobeAmericas size={33} />English (US)</FooterButton>
          <Spacer />
          <Copyright>© 2008 - 2020, Amazon Web Services, Inc. or its affiliates. All rights reserved.</Copyright>
          <FooterLink href="#privacy">Privacy Policy</FooterLink>
          <FooterLink href="#terms">Terms of Use</FooterLink>
        </Footer>
      </BrowserWindow>

      <Dock>
        {dockGroups.map((group, i) => (
          <React.Fragment key={i}>
            {i > 0 && <DockDivider />}
            {group.map(([name, Icon, running]) => (
              <DockSlot key={name} aria-label={name}>
                <Icon />
                {running && <RunningDot />}
              </DockSlot>
            ))}
          </React.Fragment>
        ))}
      </Dock>
    </Desktop>
  );
}
